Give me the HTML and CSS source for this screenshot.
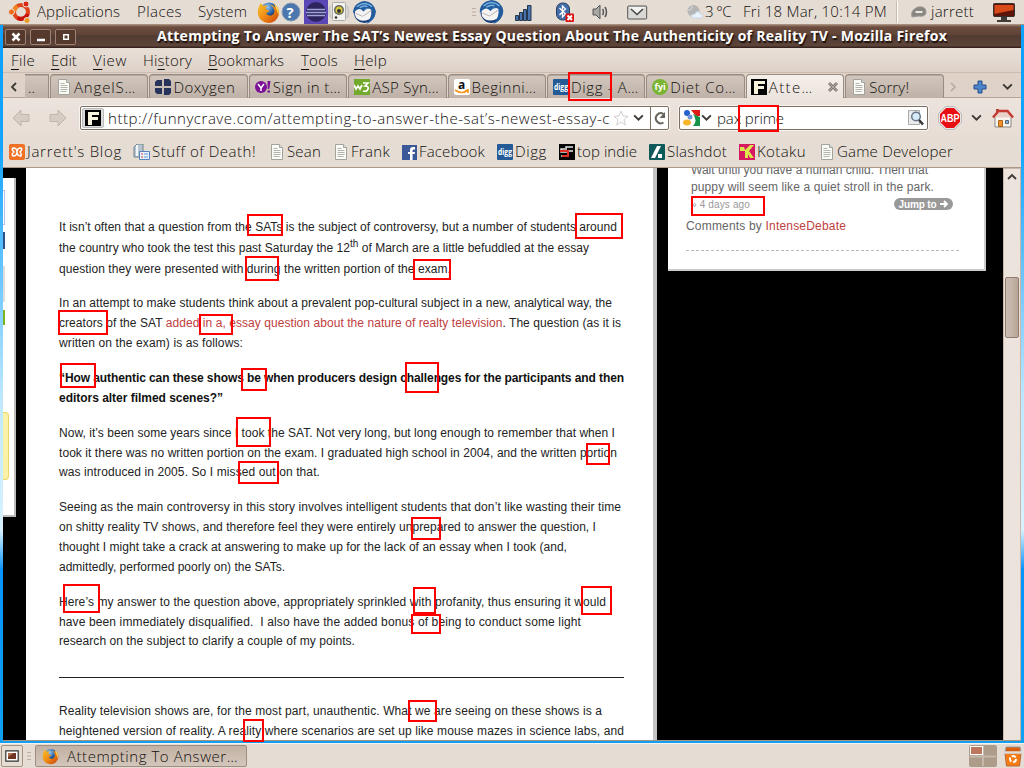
FILE: index.html
```html
<!DOCTYPE html>
<html lang="en">
<head>
<meta charset="utf-8">
<title>Desktop</title>
<link rel="stylesheet" href="styles.css">
</head>
<body>
<svg class="defs" aria-hidden="true">
<defs>
<radialGradient id="blue" cx=".4" cy=".25"><stop offset="0" stop-color="#9cc8ed"/><stop offset=".6" stop-color="#3c79b9"/><stop offset="1" stop-color="#173f7c"/></radialGradient>
<linearGradient id="flame" x1="0" y1="0" x2="1" y2="1"><stop offset="0" stop-color="#f8c32c"/><stop offset=".5" stop-color="#f08b16"/><stop offset="1" stop-color="#c43d0a"/></linearGradient>
</defs>
<symbol id="doc" viewBox="0 0 16 16"><path d="M2.5.5h8l3 3v12h-11z" fill="#fafaf6" stroke="#a3a39c"/><path d="M10.500.5v3h3" fill="#ddd" stroke="#a3a39c"/><path d="M4.500 4.500h4M4.500 6.500h7M4.500 8.500h7M4.500 10.500h7M4.500 12.500h6" stroke="#b5b5ae"/></symbol>
<symbol id="firefox" viewBox="0 0 24 24"><circle cx="12.500" cy="11" r="9.500" fill="url(#blue)"/><path d="M4 2L6 5Q8 4 11 5Q8 7 10 9L13 10Q12 13 9 12Q11 16 15 15Q19 13 18 9Q17 6 14 4Q17 4 19 7L18 3Q24 8 23 14Q20 23 12 23Q3 22 1 14Q0 8 4 2Z" fill="url(#flame)"/><path d="M18 3Q24 8 22.500 15Q20 7 18 3Z" fill="#fbdb4c"/></symbol>
<symbol id="bird" viewBox="0 0 24 24"><circle cx="12" cy="12" r="11" fill="url(#blue)"/><path d="M3 8Q7 7 11 11Q16 6 20 9Q22 15 17 19Q8 23 3 17Q1 12 3 8Z" fill="#f6f4f2"/><path d="M3 13L10 16L19 10" fill="none" stroke="#b5b5b5"/><path d="M0 13Q0 2 12 0Q22 1 24 11Q23 20 14 24Q20 17 19 9Q14 5 11 11Q7 5 0 13Z" fill="#235c9e"/><path d="M4 6Q12-1 20 6M7 7q5-3 8-1" fill="none" stroke="#79b2df" stroke-width="1.500"/></symbol>
<symbol id="chev" viewBox="0 0 12 12"><path d="M2 4l4 4 4-4" fill="none" stroke="#3d3834" stroke-width="1.800"/></symbol>
<symbol id="digg" viewBox="0 0 16 16"><rect width="16" height="16" rx="1" fill="#245a96"/><text x="1" y="10.500" class="digg-t" textLength="14" lengthAdjust="spacingAndGlyphs">digg</text></symbol>
<symbol id="fc" viewBox="0 0 16 16"><rect width="16" height="16" fill="#000"/><path d="M3 2h11v3H7v2h6v3H7v5H3z" fill="#f6f2dc"/></symbol>
<symbol id="arrow" viewBox="0 0 20 18"><path d="M2 9l8-8v4.500h8v7h-8V17z" fill="#d5ccc5" stroke="#bfb5ad"/></symbol>
</svg>

<div class="desktop">
<header class="panel top">
<svg width="24" height="24" viewBox="0 0 24 24"><circle cx="13" cy="12" r="7" fill="none" stroke="#df4518" stroke-width="4"/><path d="M6 12a7 7 0 0 1 3.500-6" fill="none" stroke="#f58220" stroke-width="4"/><path d="M9.500 18a7 7 0 0 0 10-4" fill="none" stroke="#c9130b" stroke-width="4"/><g stroke="#e5dcd3"><circle cx="3.500" cy="12" r="3" fill="#f06a14"/><circle cx="18" cy="4" r="3" fill="#d92b14"/><circle cx="19" cy="20.500" r="3" fill="#f09b20"/></g></svg>
<span data-w="83">Applications</span><span data-w="45">Places</span><span data-w="49">System</span>
<svg width="23" height="23"><use href="#firefox"/></svg>
<svg width="20" height="20"><circle cx="10" cy="10" r="9" fill="#4a78ae" stroke="#8b9bb0"/><text x="5.500" y="15.500" class="help-t">?</text></svg>
<svg width="24" height="24"><rect width="24" height="24" fill="#5b47b6"/><circle cx="12" cy="12" r="10" fill="#2e2560"/><path d="M3 9.500h18M2 12.500h20M3 15.500h18" stroke="#9fa5d6" stroke-width="1.500"/></svg>
<svg width="22" height="22" viewBox="0 0 22 22"><path d="M2 5q-2 7 1 12M19 5q3 7 0 12" fill="none" stroke="#c9c9c9" stroke-width="2"/><rect x="4.500" y="1.500" width="13" height="18" rx="1" fill="#f2f2ee" stroke="#aaa"/><circle cx="11" cy="9" r="5" fill="#656560"/><circle cx="11" cy="9" r="3.500" fill="#d7c93c"/><circle cx="11" cy="10" r="2" fill="#333"/><circle cx="8" cy="16.500" r="1.300" fill="#333"/></svg>
<svg width="23" height="23"><use href="#bird"/></svg>
<svg width="5" height="10"><path d="M0 1.500h4M0 5h4M0 8.500h4" stroke="#bcaea2"/></svg>
<svg width="25" height="24" viewBox="0 0 24 24"><use href="#bird"/></svg>
<svg width="18" height="18"><g fill="#4974ad" stroke="#25364d"><path d="M.5 12.500h3v5h-3zM4.500 9.500h3v8h-3zM8.500 6.500h3v11h-3zM12.500 2.500h3.500v15h-3.500z"/></g></svg>
<svg width="19" height="20"><rect x=".5" y="1" width="13" height="17" rx="6" fill="#426da8" stroke="#263e64"/><path d="M3.500 6l6 6-3 3V4l3 3-6 6" fill="none" stroke="#fff" stroke-width="1.300"/><rect x="9.500" y="11.500" width="8.500" height="8.500" rx="1" fill="#dd1111"/><path d="M11.500 13.500l4.500 4.500m0-4.500l-4.500 4.500" stroke="#fff" stroke-width="2"/></svg>
<svg width="16" height="16"><path d="M1 5h3l4-4v14l-4-4H1z" fill="#a6a6a2" stroke="#555"/><path d="M10.500 5q2 3 0 6M13 3q3 5 0 10" fill="none" stroke="#555" stroke-width="1.500"/></svg>
<svg width="21" height="15"><rect x=".7" y="1" width="19" height="13" rx="1" fill="#d9d8d5" stroke="#555"/><path d="M2 2h16l-8 8z" fill="#f3f3f1"/><path d="M4 4l6 5.500L16 4" fill="none" stroke="#444" stroke-width="1.500"/></svg>
<svg width="17" height="16"><circle cx="6.500" cy="7" r="6" fill="#b5b5b5"/><path d="M3 12q2-2 5 0M1 6q4 1 4-4" stroke="#ddd" fill="none"/><path d="M5 14q-1-4 3-4 3-5 5 0 4 0 2 4z" fill="#e8f2fd" stroke="#c9d8e8"/></svg>
<span data-w="26">3 °C</span><span data-w="144">Fri 18 Mar, 10:14 PM</span><i class="sep"></i>
<svg width="17" height="14"><path d="M1 12q-2-7 6-10 8-1 8 5 0 5-7 4z" fill="#89867f" stroke="#999"/><path d="M4.500 7h7" stroke="#ece8e2" stroke-width="2"/></svg>
<span data-w="43">jarrett</span>
<svg width="22" height="20"><rect x=".5" y="1.500" width="21" height="13" rx="1" fill="#5c140b" stroke="#33302d"/><path d="M1.500 3h19v5q-10 2-19 4z" fill="#d84b18"/><path d="M8 15h6v3h4v2H4v-2h4z" fill="#403d39"/></svg>
</header>

<main class="window">
<div class="title"><div class="wbtns">
<i><svg width="12" height="12"><path d="M2.500 2.500l7 7m0-7l-7 7" stroke="#fff" stroke-width="2.500"/></svg></i><i><svg width="12" height="12"><path d="M2 9h8" stroke="#fff" stroke-width="2.500"/></svg></i><i><svg width="12" height="12"><path d="M3.800 3.800h4.500v4.500H3.800z" fill="none" stroke="#fff" stroke-width="1.500"/></svg></i></div>
<b data-w="790">Attempting To Answer The SAT’s Newest Essay Question About The Authenticity of Reality TV - Mozilla Firefox</b></div>
<nav class="menu"><span data-w="24"><u>F</u>ile</span><span data-w="26"><u>E</u>dit</span><span data-w="34"><u>V</u>iew</span><span data-w="49">Hi<u>s</u>tory</span><span data-w="76"><u>B</u>ookmarks</span><span data-w="37"><u>T</u>ools</span><span data-w="33"><u>H</u>elp</span></nav>

<div class="tabs">
<span class="scr"><svg width="12" height="12" viewBox="0 0 12 12"><path d="M8 2L4 6l4 4" fill="none" stroke="#3d3834" stroke-width="1.800"/></svg></span>
<span class="tab stub">..</span>
<span class="tab"><svg width="16" height="16"><use href="#doc"/></svg><span data-w="62">AngelS…</span></span>
<span class="tab"><svg width="16" height="16"><path d="M2 1h5v6H0V3zM9 0h5l2 2v5H9zM0 9h7v6H2l-2-2zM9 9h7v5l-2 2H9z" fill="#27335a"/></svg><span data-w="62">Doxygen</span></span>
<span class="tab"><svg width="16" height="16"><circle cx="6" cy="8" r="6" fill="#7d1098"/><path d="M3 5l3 4 3-4M6 9v3" stroke="#fff" stroke-width="1.500" fill="none"/><path d="M12.500 2h3l-1.200 8h-1.600zM12.500 11.500h2.500v2h-2.500z" fill="#7d1098"/></svg><span data-w="68">Sign in t…</span></span>
<span class="tab"><svg width="16" height="16"><rect width="16" height="16" fill="#73a92c"/><path d="M0 6l2 4 2-3 2 3 2-4M9 4h5l-3 3q4 0 3 3-1 3-5 2" fill="none" stroke="#fff" stroke-width="1.700"/></svg><span data-w="67">ASP Syn…</span></span>
<span class="tab"><svg width="16" height="16"><rect width="16" height="16" rx="2" fill="#fff"/><text x="4" y="9.500" class="amz-t">a</text><path d="M1 11q7 5 13 0M11 12l3-1v3" fill="none" stroke="#f4981a" stroke-width="1.700"/></svg><span data-w="65">Beginni…</span></span>
<span class="tab"><svg width="16" height="16"><use href="#digg"/></svg><span data-w="68">Digg - A…</span></span>
<span class="tab"><svg width="16" height="16"><circle cx="8" cy="8" r="8" fill="#7ab431"/><text x="2.500" y="11" class="fyi-t">fyi</text></svg><span data-w="66">Diet Co…</span></span>
<span class="tab on"><svg width="16" height="16"><use href="#fc"/></svg><span data-w="45">Atte…</span><svg class="close" width="12" height="12"><path d="M2 2l8 8m0-8l-8 8" stroke="#857d76" stroke-width="3"/><path d="M2 2l8 8m0-8l-8 8" stroke="#b0a9a2" stroke-width="1"/></svg></span>
<span class="tab"><svg width="16" height="16"><use href="#doc"/></svg><span data-w="40">Sorry!</span></span>
<span class="tools"><svg width="12" height="12" viewBox="0 0 12 12"><path d="M4 2l4 4-4 4" fill="none" stroke="#b5a89d" stroke-width="1.500"/></svg><svg width="14" height="14"><path d="M5 1h4v4h4v4H9v4H5V9H1V5h4z" fill="#4c85ca" stroke="#244f8a"/></svg><svg width="13" height="13"><use href="#chev"/></svg></span>
</div>

<div class="nav">
<svg width="20" height="18"><use href="#arrow"/></svg>
<svg width="20" height="18"><use href="#arrow" transform="translate(20) scale(-1 1)"/></svg>
<div class="url"><i><svg width="16" height="16"><use href="#fc"/></svg></i><span data-w="502">http://funnycrave.com/attempting-to-answer-the-sat’s-newest-essay-c</span>
<svg class="star" width="16" height="16"><path d="M8 1l2 5 5 .4-4 3.300 1.300 5.300L8 12l-4.300 3L5 9.700 1 6.400 6 6z" fill="#fff" stroke="#cfcfcf"/></svg><svg class="drop" width="13" height="13"><use href="#chev"/></svg><em><svg width="16" height="16"><path d="M11.500 12.500A5 5 0 1 1 11.500 4" fill="none" stroke="#68635d" stroke-width="2"/><path d="M13 2v6H7.500z" fill="#68635d"/></svg></em></div>
<div class="search"><svg width="17" height="16"><circle cx="4" cy="3" r="3" fill="#2562cf"/><circle cx="7" cy="7" r="2.500" fill="#7195d8"/><ellipse cx="4" cy="12.500" rx="4" ry="3" fill="#f8b62c"/><path d="M8 0h9v6h-4z" fill="#e01b16"/><path d="M10 4l7 3v9h-7q5-5 0-12z" fill="#16924a"/></svg><svg width="13" height="13"><use href="#chev"/></svg><span data-w="67">pax prime</span>
<svg class="mag" width="16" height="16"><path d="M.5.5h11v14H.5z" fill="#e9edf0" stroke="#aaa"/><circle cx="8" cy="6.500" r="4.300" fill="#d7ebfa" stroke="#687685" stroke-width="1.500"/><path d="M11 10l4 4.500" stroke="#333" stroke-width="2.500"/></svg></div>
<svg width="24" height="24"><path d="M7.500.8h9l6.700 6.700v9l-6.700 6.700h-9L.8 16.500v-9z" fill="#fff" stroke="#aaa"/><path d="M8 2h8l6 6v8l-6 6H8l-6-6V8z" fill="#e80f13"/><text x="2.500" y="16" class="abp-t" textLength="19" lengthAdjust="spacingAndGlyphs">ABP</text></svg>
<svg width="13" height="13"><use href="#chev"/></svg>
<svg width="22" height="22"><path d="M4 2h3v6H4z" fill="#b34332"/><path d="M3 9h16v11H3z" fill="#f8f5ee" stroke="#888"/><path d="M1 10.500L6.500 4h9l5.500 6.500z" fill="#e9d3c8"/><path d="M1 10.500L6.500 4h9l5.500 6.500" fill="none" stroke="#c43b34" stroke-width="2.500"/><path d="M6.500 13.500h4v6h-4z" fill="#ef9331" stroke="#b16315"/><path d="M13.500 13.500h3v3h-3z" fill="#8bb5de" stroke="#567"/></svg>
</div>

<div class="marks">
<span><svg width="16" height="16"><rect width="16" height="16" rx="2" fill="#ef7125"/><path d="M4 4q4 0 4 4t4 4q1-2-1-4 3-3 1-4-4 0-4 4t-4 4q-2-2 1-4-3-3-1-4z" fill="none" stroke="#fff" stroke-width="1.500"/></svg><span data-w="95">Jarrett's Blog</span></span>
<span><svg width="17" height="16"><path d="M1 3l3-3h6v13H1z" fill="#b5c4ce" stroke="#71818d"/><path d="M4 1v11" stroke="#f3f6f8" stroke-width="2"/><path d="M6.500 7.500h10v8h-10z" fill="#e8f1fb" stroke="#5682bd"/><path d="M8 10h2M8 13h2" stroke="#d44"/><path d="M11 10h4M11 13h4" stroke="#69c"/></svg><span data-w="104">Stuff of Death!</span></span>
<span><svg width="16" height="16"><use href="#doc"/></svg><span data-w="34">Sean</span></span>
<span><svg width="16" height="16"><use href="#doc"/></svg><span data-w="39">Frank</span></span>
<span><svg width="15" height="15"><rect width="15" height="15" fill="#3b5998"/><path d="M8 15V9H6V7h2V5q0-3 3-3h2v2.500h-1.500Q10.500 4.500 10.500 6v1H13l-.4 2h-2v6z" fill="#fff"/></svg><span data-w="66">Facebook</span></span>
<span><svg width="16" height="16"><use href="#digg"/></svg><span data-w="32">Digg</span></span>
<span><svg width="16" height="16"><rect width="16" height="16" fill="#050505"/><path d="M14 3H7v4h7M6 5H2v3h7v4H2" fill="none" stroke="#e8e8e8" stroke-width="1.500"/><path d="M1 7h8v5H3" fill="none" stroke="#df3028" stroke-width="2"/></svg><span data-w="60">top indie</span></span>
<span><svg width="16" height="16"><rect width="16" height="16" rx="1" fill="#10595a"/><path d="M8 2h4L6 14H2zM9 10h4v4H9z" fill="#fff"/></svg><span data-w="60">Slashdot</span></span>
<span><svg width="16" height="16"><rect width="16" height="16" fill="#d61961"/><path d="M1 3h4l1 3 5-5h4l-5 6 5 7h-4L9 10v4H6V7H1z" fill="#dce54e"/></svg><span data-w="49">Kotaku</span></span>
<span><svg width="16" height="16"><use href="#doc"/></svg><span data-w="116">Game Developer</span></span>
</div>

<div class="view">
<div class="sliver"><i class="s1"></i><i class="s2"></i><i class="s3"></i><i class="s4"></i><i class="s5"></i></div>
<article class="post">
<p><span data-w="558">It isn’t often that a question from the SATs is the subject of controversy, but a number of students around</span><span data-w="530">the country who took the test this past Saturday the 12<sup>th</sup> of March are a little befuddled at the essay</span><span data-w="392">question they were presented with during the written portion of the exam.</span></p>
<p><span data-w="553">In an attempt to make students think about a prevalent pop-cultural subject in a new, analytical way, the</span><span data-w="562">creators of the SAT <a>added in a, essay question about the nature of realty television</a>. The question (as it is</span><span data-w="184">written on the exam) is as follows:</span></p>
<p class="strong"><span data-w="565">“How authentic can these shows be when producers design challenges for the participants and then</span><span data-w="164">editors alter filmed scenes?”</span></p>
<p><span data-w="556">Now, it’s been some years since I took the SAT. Not very long, but long enough to remember that when I</span><span data-w="558">took it there was no written portion on the exam. I graduated high school in 2004, and the written portion</span><span data-w="261">was introduced in 2005. So I missed out on that.</span></p>
<p><span data-w="562">Seeing as the main controversy in this story involves intelligent students that don’t like wasting their time</span><span data-w="537">on shitty reality TV shows, and therefore feel they were entirely unprepared to answer the question, I</span><span data-w="508">thought I might take a crack at answering to make up for the lack of an essay when I took (and,</span><span data-w="226">admittedly, performed poorly on) the SATs.</span></p>
<p><span data-w="547">Here’s my answer to the question above, appropriately sprinkled with profanity, thus ensuring it would</span><span data-w="522">have been immediately disqualified.&nbsp; I also have the added bonus of being to conduct some light</span><span data-w="296">research on the subject to clarify a couple of my points.</span></p>
<hr>
<p><span data-w="543">Reality television shows are, for the most part, unauthentic. What we are seeing on these shows is a</span><span data-w="565">heightened version of reality. A reality where scenarios are set up like mouse mazes in science labs, and</span></p>
</article>
<aside class="side">
<span class="c1" data-w="237">Wait until you have a human child. Then that</span>
<span class="c1" data-w="243">puppy will seem like a quiet stroll in the park.</span>
<div class="meta"><span data-w="59">» 4 days ago</span><b><span data-w="38">Jump to</span><svg width="9" height="8"><path d="M0 4h7M4 1l3 3-3 3" fill="none" stroke="#fff" stroke-width="1.800"/></svg></b></div>
<span class="by" data-w="160">Comments by <a>IntenseDebate</a></span>
</aside>
<div class="scroll"><svg width="12" height="12"><use href="#chev" transform="matrix(1 0 0 -1 0 12)"/></svg><i></i><svg width="12" height="12"><use href="#chev"/></svg></div>
</div>
</main>

<footer class="panel bottom">
<span class="show"><svg width="14" height="12"><path d="M.8.800h12.400v10.400H.8z" fill="#fff" stroke="#333" stroke-width="1.200"/><path d="M3 3h8v6H3z" fill="#6e3524"/><path d="M3 3h6L3 7z" fill="#b46c4b"/></svg></span>
<svg width="5" height="10"><path d="M0 1.500h4M0 5h4M0 8.500h4" stroke="#bcaea2"/></svg>
<span class="task"><svg width="17" height="17"><use href="#firefox"/></svg><span data-w="171">Attempting To Answer…</span></span>
<svg class="pager" width="28" height="22"><rect width="28" height="22" rx="2" fill="#ae9c8b"/><path d="M14 1v20M1 11.500h26" stroke="#c6b8aa" stroke-width="2"/><rect x="1.500" y="1.500" width="12" height="8" fill="#bd775d" stroke="#fff"/></svg>
<svg width="20" height="22"><path d="M3 2h14l1 6H2z" fill="#d95d0d" stroke="#999"/><path d="M2 8h16l-1.500 13h-13z" fill="#f57b13" stroke="#b7683a"/><path d="M.5 7.500h19" stroke="#ddd" stroke-width="2.500"/><circle cx="10" cy="14" r="3" fill="none" stroke="#fff" stroke-width="2" stroke-dasharray="4.500 1.700"/></svg>
</footer>
<div id="boxes" class="boxes"></div>
</div>
<script src="script.js"></script>
</body>
</html>
```

FILE: styles.css
```css
*{box-sizing:border-box}
body{margin:0;width:1024px;height:768px;overflow:hidden;font:300 15px "Open Sans","Noto Sans",sans-serif;color:#12100e}
svg{display:block;flex:none}
.defs{position:absolute;width:0;height:0}
[data-w]{white-space:pre;display:block;width:max-content}
.desktop{position:relative;width:1024px;height:768px;display:flex;flex-direction:column;background:linear-gradient(#0a9fff,#14a4ff 150px,#bfe8ff 400px,#d8f1ff 530px,#0892ff 570px,#12a2ef 768px)}
.panel{background:#e5dcd3;flex:none}
.top{height:25px;border-bottom:1px solid #a58f7e;display:grid;align-items:center;padding-left:8px;grid-template-columns:29px 100px 61px 59px 24px 23px 24px 25px 119px 7px 36px 41px 36px 35px 60px 18px 38px 153px 15px 20px 62px 31px}
.top [data-w]{line-height:18px;margin-top:-2px}
.sep{width:2px;height:22px;background:#c9bcb0;border-right:1px solid #fff}
.window{margin:0 3px;height:716px;flex:none;display:flex;flex-direction:column;border-bottom:1px solid #ab927f}
.title{height:23px;background:linear-gradient(#9b7a68 0,#6c4d3f 2px,#624538 9px,#503b32 11px,#5e453a 21px,#37241f 22px);display:flex;align-items:center;color:#fff;font-size:14px;text-shadow:1px 2px 1px #1c100c}
.title b{font-weight:700;line-height:18px;margin-top:-1px}
.wbtns{display:flex;gap:4px;padding-left:2px;width:154px}
.wbtns i{width:21px;height:16px;border:1px solid #9e8374;border-radius:2px;background:#55392d;display:flex;align-items:center;justify-content:center}
.menu{height:25px;background:linear-gradient(#e8dfd7,#ded2c8);border-bottom:1px solid #cdbcae;padding-left:8px;display:grid;align-items:center;grid-template-columns:40px 42px 50px 65px 93px 53px 40px}
.menu u{text-underline-offset:3px;text-decoration-thickness:1px}
.tabs{height:25px;background:#dfd3c9;border-bottom:1px solid #b9a697;display:grid;grid-template-columns:22px 25px repeat(9,99.400px) 74px;padding-top:1px}
.tab [data-w]{line-height:20px;margin-top:-1px}
.scr,.tools{display:flex;align-items:center;justify-content:center}
.tools{gap:14px;padding-left:0;margin-left:-3px}
.tab{display:flex;align-items:center;gap:2px;padding-left:5px;margin-right:1px;border:1px solid #978b82;border-bottom:0;border-radius:4px 4px 0 0;background:linear-gradient(#d3c7bd,#bdb0a6);box-shadow:inset 0 1px #b5aaa1;overflow:hidden}
.tab.stub{padding-left:3px;border-left:0;border-radius:0}
.tab.on{background:linear-gradient(#f5efea,#ebe3dd);height:25px;padding-left:4px;box-shadow:none}
.close{margin-left:11px}
.nav{height:39px;background:linear-gradient(#ece3dd,#e7ddd5);display:grid;align-items:center;padding-left:8px;grid-template-columns:37px 32px 599px 259px 32px 22px 24px}
.nav [data-w]{line-height:20px}
.url,.search{height:24px;border:1px solid #7d6e62;border-radius:2px;background:#fff;display:flex;align-items:center;box-shadow:0 0 0 1px #f7f3ef}
.url{width:589px}
.url i{width:23px;height:20px;margin:0 4px 0 1px;border:1px solid #bbb;border-radius:2px;background:#dcdcdc;display:flex;align-items:center;justify-content:center}
.url .star{margin-left:3px}
.drop{margin:0 5px 0 3px}
.url em{border-left:1px solid #7d6e62;height:22px;display:flex;align-items:center;padding-left:1px}
.search{width:249px;padding-left:3px;gap:0}
.search span{margin-left:4px}
.mag{margin-left:auto;margin-right:3px}
.marks{height:31px;background:#e5dcd3;border-bottom:1px solid #ab9786;padding-left:6px;display:grid;align-items:center;grid-template-columns:124px 136px 64px 69px 95px 62px 90px 90px 80px 150px}
.marks>span{display:flex;align-items:center;gap:2px}
.marks [data-w]{line-height:20px;margin-top:-2px}
.digg-t{font:bold 8px "Open Sans",sans-serif;fill:#fff}
.help-t{font:bold 15px "Open Sans",sans-serif;fill:#fff}
.amz-t{font:bold 12px "Open Sans",sans-serif;fill:#111}
.fyi-t{font:bold 9px "Open Sans",sans-serif;fill:#fff}
.abp-t{font:bold 11px "Liberation Sans",sans-serif;fill:#fff}
.view{height:572px;background:#000;display:grid;grid-template-columns:23px 631px 11px 318px 17px 18px;overflow:hidden;font:400 12px "Liberation Sans",sans-serif;color:#232323}
.sliver{margin-top:10px;width:13px;height:339px;background:#fff;border-right:2px solid #bbb;border-bottom:2px solid #bbb}
.sliver i{display:block;width:2px}
.s1{height:35px;margin-top:12px;border:1px solid #b8bdf0;border-left:0}
.s2{height:17px;margin-top:7px;background:#2d4f8a}
.s3{height:36px;margin-top:17px;background:#ddd}
.s4{height:15px;margin-top:8px;background:#7eb31e}
.sliver .s5{width:6px;height:68px;margin-top:87px;background:#fbf1a8;border:1px solid #ecd867;border-left:0;border-radius:0 4px 4px 0}
.post{background:#fff;border-right:4px solid #c4c4c4;padding:50px 0 0 33px;line-height:19.750px}
.post p{margin:0 0 15.400px}
.post p:first-child{margin-bottom:15px}
.post p:first-child span+span{padding-top:1px}
.post sup{font-size:10px;line-height:0}
.post a,.by a{color:#bf4040}
.strong{font-weight:bold;color:#111}
.post hr{width:565px;margin:25px 0 24px;border:0;border-top:1px solid #222}
.side{grid-column:4;height:103px;background:#fff;border:solid #ccc;border-width:0 2px 2px 0;color:#666;padding-left:23px}
.c1{line-height:17px;margin-top:-6px}
.c1+.c1{margin-top:0}
.meta{height:16px;display:flex;align-items:center;justify-content:space-between;padding-right:31px;font-size:10px;color:#999}
.meta b{height:12px;width:59px;border-radius:6px;background:#999;color:#fff;display:flex;align-items:center;justify-content:center;gap:3px}
.by{margin:6px 0 0 -5px;line-height:16px}
.side:after{content:"";display:block;width:273px;margin:16px 0 0 -5px;border-top:1px dashed #bbb}
.scroll{grid-column:6;background:#ece3dd;border:1px solid #c9b8aa;display:flex;flex-direction:column;align-items:center;padding:2px 0}
.scroll i{width:14px;height:61px;margin:94px 0 auto;border:1px solid #8f7c6f;border-radius:2px;background:linear-gradient(90deg,#cbbbb0,#c6b6ab 40%,#b7a496)}
.bottom{margin-top:auto;height:25px;border-top:1px solid #f7f2ed;display:grid;align-items:center;grid-template-columns:26px 8px 934px 34px 22px;padding-left:1px}
.show{width:22px;height:22px;border:1px solid #a39284;border-radius:2px;display:flex;align-items:center;justify-content:center}
.task{width:212px;height:22px;border:1px solid #9e8d80;border-radius:2px;background:linear-gradient(#c2b1a3,#d3c6bb);display:flex;align-items:center;gap:8px;padding-left:6px}
.boxes i{position:absolute;border:2px solid #f00}
```

FILE: script.js
```js
// Spread each label's glyphs over its intended width.
document.querySelectorAll('[data-w]').forEach(function (el) {
  var natural = el.getBoundingClientRect().width;
  var n = el.textContent.length;
  el.style.letterSpacing = ((el.dataset.w - natural) / n) + 'px';
});

// Highlight rectangles: x, y, width, height.
[
  [568,72,44,29],[738,105,41,27],[247,214,36,22],[575,213,48,26],[245,256,34,25],
  [413,259,38,21],[58,310,50,25],[199,314,34,21],[60,363,36,25],[241,368,26,23],
  [405,362,34,31],[236,417,35,30],[586,443,24,22],[238,461,41,23],[411,517,30,23],
  [63,584,37,29],[413,587,23,27],[581,586,31,29],[411,614,30,20],[408,700,29,22],
  [243,719,21,23],[691,196,74,20]
].forEach(function (b) {
  var box = document.createElement('i');
  box.style.left = b[0] + 'px';
  box.style.top = b[1] + 'px';
  box.style.width = b[2] + 'px';
  box.style.height = b[3] + 'px';
  document.getElementById('boxes').appendChild(box);
});
```
